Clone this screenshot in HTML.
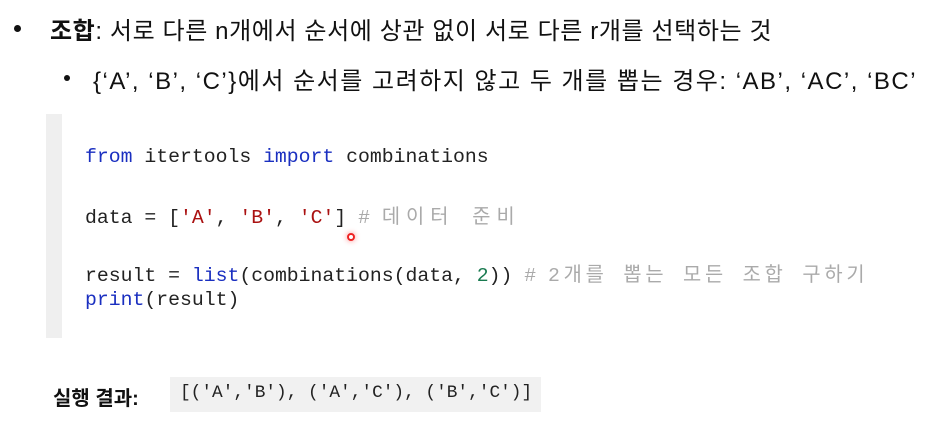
<!DOCTYPE html>
<html><head><meta charset="utf-8"><style>
body{margin:0;width:944px;height:431px;background:#fff;position:relative;overflow:hidden;font-family:"Liberation Sans","Noto Sans CJK KR",sans-serif;color:#111}
.a{position:absolute;white-space:nowrap}
.t1{left:50px;top:11px;font-size:24px;letter-spacing:0.6px}
.t2{left:93px;top:61px;font-size:24px;letter-spacing:1.5px}
.dot{position:absolute;width:7px;height:7px;border-radius:50%;background:#111}
.bar{position:absolute;left:46px;top:114px;width:16px;height:224px;background:#efefef}
.code{position:absolute;left:85px;font-family:"Liberation Mono","Noto Sans CJK KR",monospace;font-size:19.8px;color:#222;white-space:pre}
.k{color:#1a2fc0}.s{color:#a11}.n{color:#197a50}.c{color:#aaa}
.kr{letter-spacing:6px}.kr2{letter-spacing:3.8px}
.res{position:absolute;left:170px;top:377px;width:371px;height:35px;background:#f1f1f1}
</style></head><body>
<div class="dot" style="left:14px;top:25px"></div>
<div class="a t1"><b>조합</b>: 서로 다른 n개에서 순서에 상관 없이 서로 다른 r개를 선택하는 것</div>
<div class="dot" style="left:64px;top:75px;width:6px;height:6px"></div>
<div class="a t2">{‘A’, ‘B’, ‘C’}에서 순서를 고려하지 않고 두 개를 뽑는 경우: ‘AB’, ‘AC’, ‘BC’</div>
<div class="bar"></div>
<div class="code" style="top:146px"><span class="k">from</span> itertools <span class="k">import</span> combinations</div>
<div class="code" style="top:200px">data = [<span class="s">'A'</span>, <span class="s">'B'</span>, <span class="s">'C'</span>] <span class="c"># <span class="kr">데이터 준비</span></span></div>
<div class="code" style="top:258px">result = <span class="k">list</span>(combinations(data, <span class="n">2</span>)) <span class="c"># <span class="kr2">2개를 뽑는 모든 조합 구하기</span></span></div>
<div class="code" style="top:289px"><span class="k">print</span>(result)</div>
<div style="position:absolute;left:347px;top:233px;width:8px;height:8px;border-radius:50%;border:2px solid #e22;box-sizing:border-box;box-shadow:0 0 6px #f88"></div>
<div class="a" style="left:53px;top:382px;font-size:20px;font-weight:bold">실행 결과:</div>
<div class="res"></div>
<div class="code" style="left:180px;top:383px;font-size:17.8px">[('A','B'), ('A','C'), ('B','C')]</div>
</body></html>
